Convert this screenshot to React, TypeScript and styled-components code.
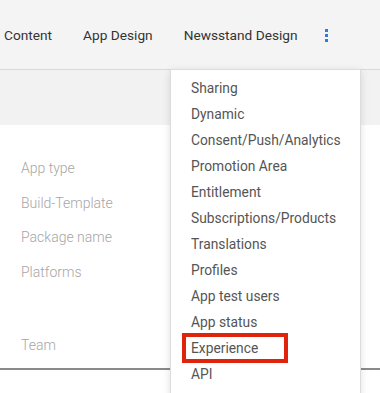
import { createGlobalStyle, styled } from "styled-components";

const GlobalStyle = createGlobalStyle`
  html, body {
    margin: 0;
    padding: 0;
    background: #ffffff;
    font-family: Roboto, "Liberation Sans", sans-serif;
  }
`;

const Page = styled.div`
  position: relative;
  width: 380px;
  height: 393px;
  overflow: hidden;
  background: #ffffff;
`;

const TopBar = styled.nav`
  height: 69px;
  background: #f4f4f4;
  border-bottom: 1px solid #d9d9d9;
  display: flex;
  align-items: center;
  padding-left: 4px;
  gap: 31px;
`;

const Tab = styled.span`
  font-size: 13.7px;
  color: #333333;
  white-space: nowrap;
`;

const Kebab = styled.span`
  display: flex;
  flex-direction: column;
  gap: 2px;
  margin-left: -4px;
  padding-top: 1px;
  span {
    width: 3px;
    height: 3px;
    background: #2a7de1;
  }
`;

const Band = styled.div`
  height: 55px;
  background: #f2f2f2;
`;

const Details = styled.section`
  padding: 34px 21px 0;
  display: flex;
  flex-direction: column;
`;

const Label = styled.div<{ $gap?: number; $height?: number }>`
  font-size: 14px;
  font-weight: 300;
  color: #a6a6a6;
  height: ${(p) => p.$height ?? 34.5}px;
  line-height: 18px;
  margin-top: ${(p) => p.$gap ?? 0}px;
`;

const Divider = styled.hr`
  margin: 0;
  border: none;
  border-top: 2px solid #8a8a8a;
`;

const Menu = styled.ul`
  position: absolute;
  left: 170px;
  top: 69px;
  width: 191px;
  height: 340px;
  margin: 0;
  padding: 8px 0 0;
  list-style: none;
  background: #ffffff;
  border: 1px solid #dcdcdc;
  box-shadow: 0 2px 8px rgba(0, 0, 0, 0.12);
  box-sizing: border-box;
`;

const MenuItem = styled.li<{ $marked?: boolean }>`
  position: relative;
  height: 26px;
  line-height: 20px;
  padding-left: 20px;
  font-size: 13.8px;
  color: #555555;
  white-space: nowrap;
  ${(p) =>
    p.$marked &&
    `
    &::after {
      content: "";
      position: absolute;
      left: 11px;
      top: -5px;
      width: 98px;
      height: 22px;
      border: 4px solid #e0240c;
    }
  `}
`;

const items = [
  "Sharing",
  "Dynamic",
  "Consent/Push/Analytics",
  "Promotion Area",
  "Entitlement",
  "Subscriptions/Products",
  "Translations",
  "Profiles",
  "App test users",
  "App status",
  "Experience",
  "API",
];

export default function App() {
  return (
    <Page>
      <GlobalStyle />
      <TopBar>
        <Tab>Content</Tab>
        <Tab>App Design</Tab>
        <Tab>Newsstand Design</Tab>
        <Kebab>
          <span />
          <span />
          <span />
        </Kebab>
      </TopBar>
      <Band />
      <Details>
        <Label>App type</Label>
        <Label>Build-Template</Label>
        <Label>Package name</Label>
        <Label>Platforms</Label>
        <Label $gap={39} $height={32}>
          Team
        </Label>
      </Details>
      <Divider />
      <Menu>
        {items.map((item) => (
          <MenuItem key={item} $marked={item === "Experience"}>
            {item}
          </MenuItem>
        ))}
      </Menu>
    </Page>
  );
}
